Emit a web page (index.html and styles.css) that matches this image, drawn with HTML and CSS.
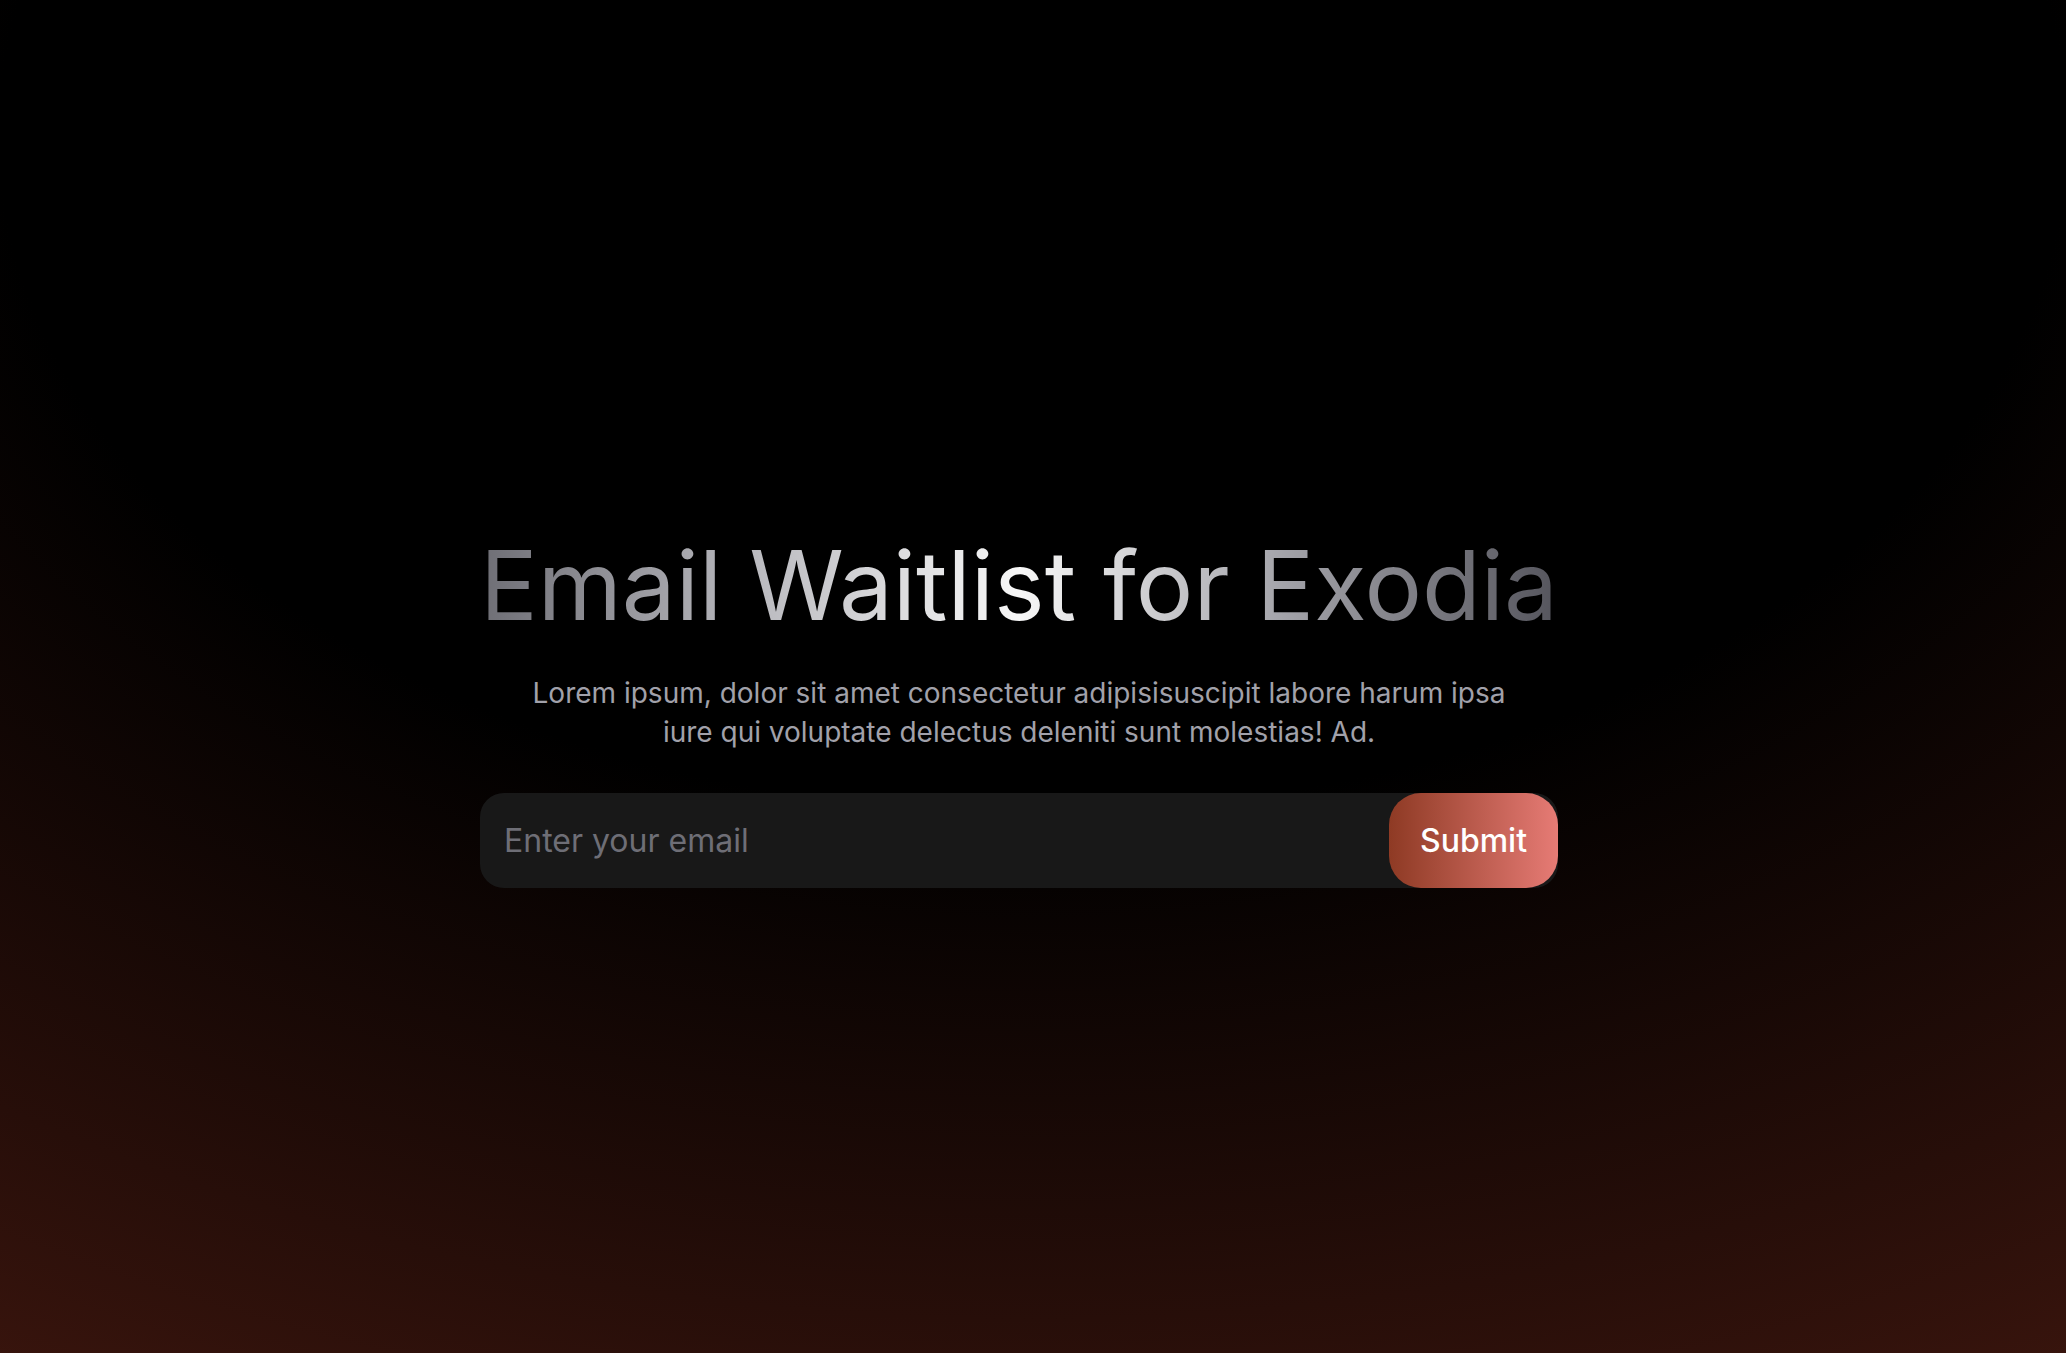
FILE: index.html
```html
<!DOCTYPE html>
<html lang="en">
<head>
<meta charset="utf-8">
<title>Email Waitlist for Exodia</title>
<link rel="stylesheet" href="styles.css">
</head>
<body>
<main class="hero">
  <h1 class="title">Email Waitlist for Exodia</h1>
  <p class="lead">Lorem ipsum, dolor sit amet consectetur adipisisuscipit labore harum ipsa<br>iure qui voluptate delectus deleniti sunt molestias! Ad.</p>
  <form class="signup" onsubmit="return false">
    <input class="email" type="email" placeholder="Enter your email">
    <button class="submit" type="submit">Submit</button>
  </form>
</main>
</body>
</html>
```
FILE: styles.css
```css
html, body {
  margin: 0;
  padding: 0;
  height: 100%;
}
body {
  background: radial-gradient(125% 125% at 50% 10%, #000 40%, #4e1c12 100%);
  font-family: Inter, "Noto Sans", sans-serif;
  color: #fff;
  overflow: hidden;
}
.hero {
  box-sizing: border-box;
  min-height: 100vh;
  display: flex;
  flex-direction: column;
  align-items: center;
  padding-top: 537px;
  padding-right: 28px;
}
.title {
  margin: 0;
  display: inline-block;
  font-size: 96px;
  font-weight: 400;
  line-height: 1;
  letter-spacing: 0;
  background: linear-gradient(to right, #6e6e75 0%, #b9b9be 25%, #f7f7f7 50%, #a2a2a8 75%, #55555d 100%);
  -webkit-background-clip: text;
  background-clip: text;
  color: transparent;
  padding-bottom: 12px;
}
.lead {
  margin: 29px 0 0;
  font-size: 28px;
  line-height: 39px;
  color: #a1a1aa;
  text-align: center;
}
.signup {
  position: relative;
  margin-top: 41px;
  width: 1078px;
  height: 95px;
  display: flex;
}
.email {
  flex: 1;
  box-sizing: border-box;
  height: 95px;
  border: none;
  outline: none;
  border-radius: 24px;
  background: #181818;
  padding: 0 24px;
  font-family: Inter, "Noto Sans", sans-serif;
  font-size: 32px;
  color: #e5e5e5;
}
.email::placeholder {
  color: #6e6e76;
}
.submit {
  position: absolute;
  top: 0;
  right: 0;
  height: 95px;
  width: 169px;
  border: none;
  border-radius: 32px;
  background: linear-gradient(to right, #8e3a24, #e67b75);
  color: #fff;
  font-family: Inter, "Noto Sans", sans-serif;
  font-size: 32px;
  font-weight: 500;
  cursor: pointer;
}
```
